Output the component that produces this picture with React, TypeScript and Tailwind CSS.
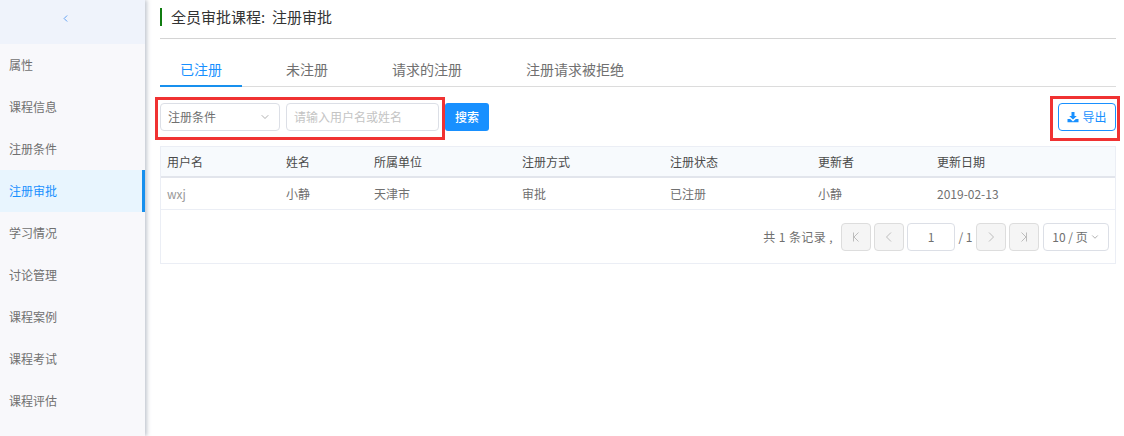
import { ChevronDown, ChevronLeft } from 'lucide-react';

const menuItems = ['属性', '课程信息', '注册条件', '注册审批', '学习情况', '讨论管理', '课程案例', '课程考试', '课程评估'];
const tabs = ['已注册', '未注册', '请求的注册', '注册请求被拒绝'];
const columns = [
  { label: '用户名', value: 'wxj', width: 'w-[119px]' },
  { label: '姓名', value: '小静', width: 'w-[88px]' },
  { label: '所属单位', value: '天津市', width: 'w-[148px]' },
  { label: '注册方式', value: '审批', width: 'w-[148px]' },
  { label: '注册状态', value: '已注册', width: 'w-[148px]' },
  { label: '更新者', value: '小静', width: 'w-[119px]' },
  { label: '更新日期', value: '2019-02-13', width: 'flex-1' },
];

function PageButton({ d }: { d: string }) {
  return (
    <div className="flex h-[28px] w-[30px] items-center justify-center rounded-[4px] border border-[#dddddd] bg-[#f5f5f5] text-[#bdbdbd]">
      <svg width="12" height="12" viewBox="0 0 12 12" fill="none" stroke="currentColor" strokeWidth="1">
        <path d={d} />
      </svg>
    </div>
  );
}

export default function App() {
  return (
    <div className="flex h-[436px] w-[1124px] overflow-hidden bg-white font-['Noto_Sans_CJK_SC','Noto_Sans',sans-serif] text-[12px]">
      <aside className="h-full w-[145px] shrink-0 bg-[#f8f8fb] shadow-[2px_0_4px_rgba(120,130,150,0.45)]">
        <div className="flex h-[44px] items-center justify-center bg-[#eff3fb] pb-[7px] pr-[15px] text-[#3f8cf0]">
          <ChevronLeft size={11} strokeWidth={1.75} />
        </div>
        {menuItems.map((item) =>
          item === '注册审批' ? (
            <div key={item} className="flex h-[42px] items-center border-r-[3px] border-[#1890ee] bg-[#e8f5fe] pl-[9px] text-[#1890ff]">
              {item}
            </div>
          ) : (
            <div key={item} className="flex h-[42px] items-center pl-[9px] text-[#707070]">
              {item}
            </div>
          ),
        )}
      </aside>

      <main className="relative flex-1 pl-[15px] pr-[8px]">
        <div className="flex h-[39px] items-start border-b border-[#d4d4d4] pt-[8px]">
          <div className="flex h-[18px] items-center border-l-2 border-[#107c10] pl-[9px] text-[15px] text-[#333333]">
            全员审批课程:&nbsp;&nbsp;注册审批
          </div>
        </div>

        <div className="mt-[15px] flex h-[33px] gap-[24px] border-b border-[#dcdcdc]">
          {tabs.map((tab, i) => (
            <div
              key={tab}
              className={
                i === 0
                  ? 'mb-[-1px] h-[33px] border-b-2 border-[#1890ee] px-[20px] pt-[1px] text-[14px] leading-[28px] text-[#1890ff]'
                  : 'px-[20px] pt-[1px] text-[14px] leading-[28px] text-[#707070]'
              }
            >
              {tab}
            </div>
          ))}
        </div>

        <div className="mt-[16px] flex h-[28px] items-center">
          <div className="flex h-[28px] w-[120px] items-center justify-between rounded-[4px] border border-[#dcdfe6] pl-[7px] pr-[8px] text-[#707070]">
            注册条件
            <ChevronDown size={12} strokeWidth={1.25} className="text-[#808080]" />
          </div>
          <div className="ml-[6px] flex h-[28px] w-[153px] items-center rounded-[4px] border border-[#dcdfe6] pl-[7px] text-[#c4c4c4]">
            请输入用户名或姓名
          </div>
          <div className="ml-[6px] flex h-[28px] w-[44px] items-center justify-center rounded-[3px] bg-[#1890ff] font-medium text-white">
            搜索
          </div>
          <div className="ml-auto flex h-[28px] w-[58px] items-center justify-center gap-[3px] rounded-[4px] border border-[#1890ff] text-[#1890ff]">
            <svg width="12" height="12" viewBox="0 0 12 12" fill="currentColor">
              <path d="M4.5 1h3v4h2.3L6 8.6 2.2 5h2.3z" />
              <path d="M.5 8h2.7L6 10.5 8.8 8h2.7v3.2H.5z" />
            </svg>
            导出
          </div>
        </div>

        <div className="mt-[15px] border border-[#ebeef5]">
          <div className="flex h-[31px] items-center border-b-[2px] border-[#e2e5ec] bg-[#f7fafd] text-[#4a4a4a]">
            {columns.map((col) => (
              <div key={col.label} className={`${col.width} pl-[6px]`}>
                {col.label}
              </div>
            ))}
          </div>
          <div className="flex h-[32px] items-center border-b border-[#ebeef5] text-[#707070]">
            {columns.map((col) => (
              <div key={col.label} className={`${col.width} pl-[6px] ${col.value === 'wxj' ? 'text-[#999999]' : ''}`}>
                {col.value}
              </div>
            ))}
          </div>
          <div className="flex h-[53px] items-center justify-end pr-[6px] text-[#707070]">
            <span className="mr-[8px] whitespace-pre tracking-[0.4px]">共 1 条记录 ,</span>
            <div className="flex gap-[3px]">
              <PageButton d="M3.5 1.5v9M8.5 1.5L4 6l4.5 4.5" />
              <PageButton d="M8 1.5L3.5 6 8 10.5" />
            </div>
            <div className="ml-[3px] flex h-[28px] w-[48px] items-center justify-center rounded-[4px] border border-[#dcdfe6]">1</div>
            <span className="w-[21px] text-center">/ 1</span>
            <div className="flex gap-[3px]">
              <PageButton d="M4 1.5L8.5 6 4 10.5" />
              <PageButton d="M8.5 1.5v9M3.5 1.5L8 6l-4.5 4.5" />
            </div>
            <div className="ml-[4px] flex h-[28px] w-[66px] items-center justify-center gap-[2px] rounded-[4px] border border-[#dcdfe6]">
              10 / 页
              <ChevronDown size={10} strokeWidth={1.5} className="text-[#808080]" />
            </div>
          </div>
        </div>

        {/* red annotation boxes drawn on the screenshot */}
        <div className="absolute left-[10px] top-[97px] h-[43px] w-[290px] border-[3px] border-[#f03232]" />
        <div className="absolute left-[905px] top-[96px] h-[45px] w-[70px] border-[3px] border-[#f03232]" />
      </main>
    </div>
  );
}
